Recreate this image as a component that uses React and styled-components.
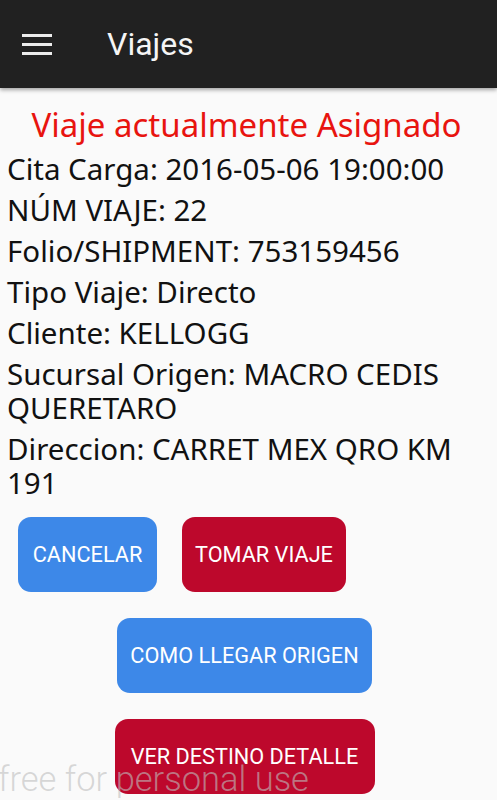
import styled, { createGlobalStyle } from 'styled-components';

const GlobalStyle = createGlobalStyle`
  html, body {
    margin: 0;
    padding: 0;
    background: #fafafa;
  }
  body {
    width: 497px;
    height: 800px;
    overflow: hidden;
  }
`;

const Screen = styled.div`
  position: relative;
  width: 497px;
  height: 800px;
  overflow: hidden;
  background: #fafafa;
  display: flex;
  flex-direction: column;
`;

const Toolbar = styled.header`
  height: 88px;
  flex-shrink: 0;
  background: #212121;
  display: flex;
  align-items: center;
  padding-left: 22px;
  box-shadow: 0 2px 4px rgba(0, 0, 0, 0.35);
  z-index: 1;
`;

const Burger = styled.div`
  width: 30px;
  display: flex;
  flex-direction: column;
  gap: 6px;
  margin-top: 1px;
`;

const Bar = styled.span`
  display: block;
  height: 3px;
  background: #ececec;
`;

const Title = styled.h1`
  margin: 0 0 0 55px;
  font-family: Roboto, "Liberation Sans", sans-serif;
  font-weight: 400;
  font-size: 32px;
  color: #f5f5f5;
`;

const Content = styled.main`
  padding: 16px 7px 0;
`;

const Heading = styled.h2`
  margin: 0 0 6px;
  text-align: center;
  font-family: "Noto Sans", "Open Sans", sans-serif;
  font-weight: 400;
  font-size: 33px;
  line-height: 42px;
  color: #e8140f;
  padding-right: 4px;
`;

const Field = styled.p`
  margin: 0 0 7px;
  font-family: "Noto Sans", "Open Sans", sans-serif;
  font-size: 29.5px;
  line-height: 34px;
  color: #111;
`;

const Actions = styled.div`
  display: flex;
  flex-direction: column;
  align-items: center;
  gap: 26px;
  margin-top: 17px;
  padding-right: 8px;
`;

const Row = styled.div`
  display: flex;
  gap: 25px;
  align-self: flex-start;
  padding-left: 11px;
`;

const Button = styled.button`
  height: 75px;
  padding: 0;
  border: none;
  border-radius: 13px;
  background: ${(p) => (p.$tone === 'red' ? '#bd082c' : '#3d88e8')};
  color: #fff;
  font-family: Roboto, "Liberation Sans", sans-serif;
  font-size: 21.7px;
  font-weight: 400;
  cursor: pointer;
`;

const Watermark = styled.div`
  position: absolute;
  left: -2px;
  top: 759px;
  font-family: Roboto, "Liberation Sans", sans-serif;
  font-weight: 300;
  font-size: 34.5px;
  color: rgba(190, 190, 190, 0.6);
  pointer-events: none;
  white-space: nowrap;
`;

const fields = [
  'Cita Carga: 2016-05-06 19:00:00',
  'NÚM VIAJE: 22',
  'Folio/SHIPMENT: 753159456',
  'Tipo Viaje: Directo',
  'Cliente: KELLOGG',
  'Sucursal Origen: MACRO CEDIS QUERETARO',
  'Direccion: CARRET MEX QRO KM 191',
];

export default function App() {
  return (
    <Screen>
      <GlobalStyle />
      <Toolbar>
        <Burger>
          <Bar />
          <Bar />
          <Bar />
        </Burger>
        <Title>Viajes</Title>
      </Toolbar>
      <Content>
        <Heading>Viaje actualmente Asignado</Heading>
        {fields.map((f) => (
          <Field key={f}>{f}</Field>
        ))}
        <Actions>
          <Row>
            <Button style={{ width: 139 }}>CANCELAR</Button>
            <Button $tone="red" style={{ width: 164 }}>TOMAR VIAJE</Button>
          </Row>
          <Button style={{ width: 255 }}>COMO LLEGAR ORIGEN</Button>
          <Button $tone="red" style={{ width: 260 }}>VER DESTINO DETALLE</Button>
        </Actions>
      </Content>
      <Watermark>free for personal use</Watermark>
    </Screen>
  );
}
